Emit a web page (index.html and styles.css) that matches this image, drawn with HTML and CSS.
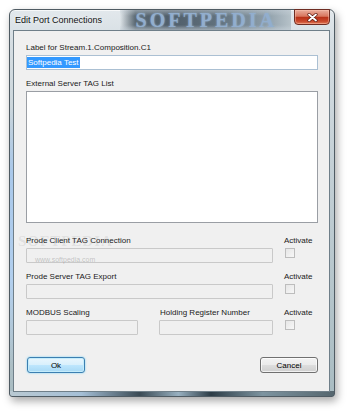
FILE: index.html
```html
<!DOCTYPE html>
<html lang="en">
<head>
    <meta charset="UTF-8">
    <title>Edit Port Connections</title>
    <link rel="stylesheet" href="styles.css">
</head>
<body>
    <div class="window">
        <div class="titlebar">
            <span class="title">Edit Port Connections</span>
            <span class="brand">SOFTPEDIA</span>
            <button class="close" type="button">
                <svg width="11" height="9" viewBox="0 0 11 9">
                    <path d="M2 1.5 L9 7.5 M9 1.5 L2 7.5" stroke="#5a1a10" stroke-width="3.2" stroke-linecap="round"/>
                    <path d="M2 1.5 L9 7.5 M9 1.5 L2 7.5" stroke="#ffffff" stroke-width="1.8" stroke-linecap="round"/>
                </svg>
            </button>
        </div>

        <div class="client">
            <div class="group">
                <label class="field-label">Label for Stream.1.Composition.C1</label>
                <div class="textbox"><span class="sel">Softpedia Test</span></div>
            </div>

            <div class="group">
                <label class="field-label">External Server TAG List</label>
                <div class="listbox"></div>
            </div>

            <div class="tag-row first">
                <div class="tag-main">
                    <label class="field-label">Prode Client TAG Connection</label>
                    <div class="field"></div>
                </div>
                <div class="activate">
                    <label class="field-label">Activate</label>
                    <span class="check"></span>
                </div>
            </div>

            <div class="tag-row">
                <div class="tag-main">
                    <label class="field-label">Prode Server TAG Export</label>
                    <div class="field"></div>
                </div>
                <div class="activate">
                    <label class="field-label">Activate</label>
                    <span class="check"></span>
                </div>
            </div>

            <div class="tag-row">
                <div class="tag-main split">
                    <div class="sub">
                        <label class="field-label">MODBUS Scaling</label>
                        <div class="field modbus"></div>
                    </div>
                    <div class="sub">
                        <label class="field-label">Holding Register Number</label>
                        <div class="field holding"></div>
                    </div>
                </div>
                <div class="activate">
                    <label class="field-label">Activate</label>
                    <span class="check"></span>
                </div>
            </div>

            <div class="buttons">
                <button class="btn default" type="button">Ok</button>
                <button class="btn" type="button">Cancel</button>
            </div>

            <!-- faint watermark over the form -->
            <span class="mark">SOFTPEDIA</span>
            <span class="mark-url">www.softpedia.com</span>
        </div>
    </div>
</body>
</html>
```

FILE: styles.css
```css
* {
    box-sizing: border-box;
}

body {
    margin: 0;
    width: 350px;
    height: 413px;
    overflow: hidden;
    background: #ffffff;
    font-family: 'Liberation Sans', Arial, sans-serif;
    font-size: 8px;
    color: #1a1a1a;
}

/* Aero window frame */
.window {
    margin: 9px 0 0 9px;
    width: 326px;
    height: 388px;
    display: flex;
    flex-direction: column;
    padding: 0 4px 4px 3px;
    border: 1px solid #4f5b63;
    border-radius: 6px 6px 3px 3px;
    background:
        linear-gradient(to right, #b9c9d2 0%, #a5bfd6 22%, #3a4a54 40%, #98b0c0 52%, #2c3c46 62%, #7d94a0 78%, #55666e 100%) bottom / 100% 5px no-repeat,
        linear-gradient(to bottom, transparent 25%, #a9c8ea 42%, #b2cfee 70%, transparent 92%) left / 4px 100% no-repeat,
        linear-gradient(to bottom, #e2e8ec 0%, #d6dee3 8%, #c4d0d6 40%, #a9bcc2 100%);
    box-shadow: 2px 4px 9px rgba(0, 0, 0, 0.35), inset 0 1px 0 rgba(255, 255, 255, 0.7);
}

.titlebar {
    height: 20px;
    display: flex;
    align-items: flex-start;
}

.title {
    margin-left: 2px;
    font-size: 9px;
    line-height: 21px;
    color: #111;
    text-shadow: 0 0 4px rgba(255, 255, 255, 0.9);
}

.brand {
    margin-left: auto;
    margin-right: 3px;
    height: 20px;
    padding: 0 14px 0 16px;
    font-family: 'Liberation Serif', serif;
    font-weight: bold;
    font-size: 20px;
    line-height: 21px;
    letter-spacing: 3px;
    color: #92aece;
    text-shadow: 0 0 2px rgba(150, 180, 210, 0.9);
    background:
        linear-gradient(to bottom, rgba(200, 210, 218, 0.5) 0%, transparent 30%, transparent 75%, rgba(200, 210, 218, 0.6) 100%),
        linear-gradient(to right, rgba(80, 96, 108, 0) 0%, #5a6872 9%, #505e6a 30%, #63737f 60%, #8d9da8 85%, #b6c2c9 100%);
}

.close {
    width: 36px;
    height: 16px;
    margin-top: -1px;
    padding: 0;
    display: flex;
    align-items: center;
    justify-content: center;
    border: 1px solid #6e2c22;
    border-radius: 0 0 4px 4px;
    background: linear-gradient(#e9ad9c 0%, #d8765e 45%, #b83218 52%, #c9482c 80%, #e07a58 100%);
    box-shadow: inset 0 0 0 1px rgba(255, 200, 180, 0.45);
}

/* Dialog client area */
.client {
    position: relative;
    flex: 1;
    display: flex;
    flex-direction: column;
    padding: 12px 11px 0 12px;
    background: #f0f0f0;
    border: 1px solid #6f7f89;
}

.field-label {
    display: block;
    line-height: 10px;
    margin-bottom: 2px;
    white-space: nowrap;
}

.group + .group {
    margin-top: 9px;
}

.textbox {
    width: 292px;
    height: 15px;
    padding: 1px 0 0 0;
    border: 1px solid #abc0d3;
    background: #ffffff;
}

.sel {
    display: inline-block;
    height: 11px;
    line-height: 11px;
    padding: 0 1px;
    background: #3399ff;
    color: #ffffff;
}

.listbox {
    width: 292px;
    height: 132px;
    border: 1px solid #9a9ea4;
    background: #ffffff;
}

.tag-row {
    display: flex;
    margin-top: 9px;
}

.tag-row.first {
    margin-top: 13px;
}

.tag-main {
    width: 247px;
}

.tag-main.split {
    display: flex;
    justify-content: space-between;
}

.field {
    height: 15px;
    border: 1px solid #c9c9c9;
    border-radius: 1px;
    background: #f0f0f0;
}

.field.modbus {
    width: 112px;
}

.field.holding {
    width: 114px;
}

.sub + .sub .field-label {
    padding-left: 1px;
}

.activate {
    margin-left: 11px;
}

.check {
    display: block;
    width: 10px;
    height: 10px;
    margin: 1px 0 0 1px;
    border: 1px solid #bdbdbd;
    background: linear-gradient(135deg, #e6e6e6, #f7f7f7);
}

.buttons {
    display: flex;
    justify-content: space-between;
    margin-top: 22px;
    padding-left: 1px;
}

.btn {
    width: 58px;
    height: 16px;
    padding: 0;
    font-family: 'Liberation Sans', Arial, sans-serif;
    font-size: 8px;
    color: #000;
    border: 1px solid #707070;
    border-radius: 3px;
    background: linear-gradient(#f3f3f3 0%, #ebebeb 48%, #dddddd 52%, #cfcfcf 100%);
    box-shadow: inset 0 0 0 1px rgba(255, 255, 255, 0.7);
}

.btn.default {
    border-color: #3c7fb1;
    background: linear-gradient(#eaf6fd 0%, #d9f0fc 48%, #bee6fd 52%, #a7d9f5 100%);
    box-shadow: inset 0 0 0 1px #c4ecfb, 0 0 2px rgba(72, 200, 250, 0.8);
}

/* watermark */
.mark {
    position: absolute;
    left: 4px;
    top: 202px;
    font-family: 'Liberation Serif', serif;
    font-weight: bold;
    font-size: 15px;
    letter-spacing: 1px;
    color: rgba(120, 120, 120, 0.14);
    pointer-events: none;
}

.mark-url {
    position: absolute;
    left: 21px;
    top: 225px;
    font-size: 7px;
    color: rgba(120, 120, 120, 0.4);
    pointer-events: none;
}
```
